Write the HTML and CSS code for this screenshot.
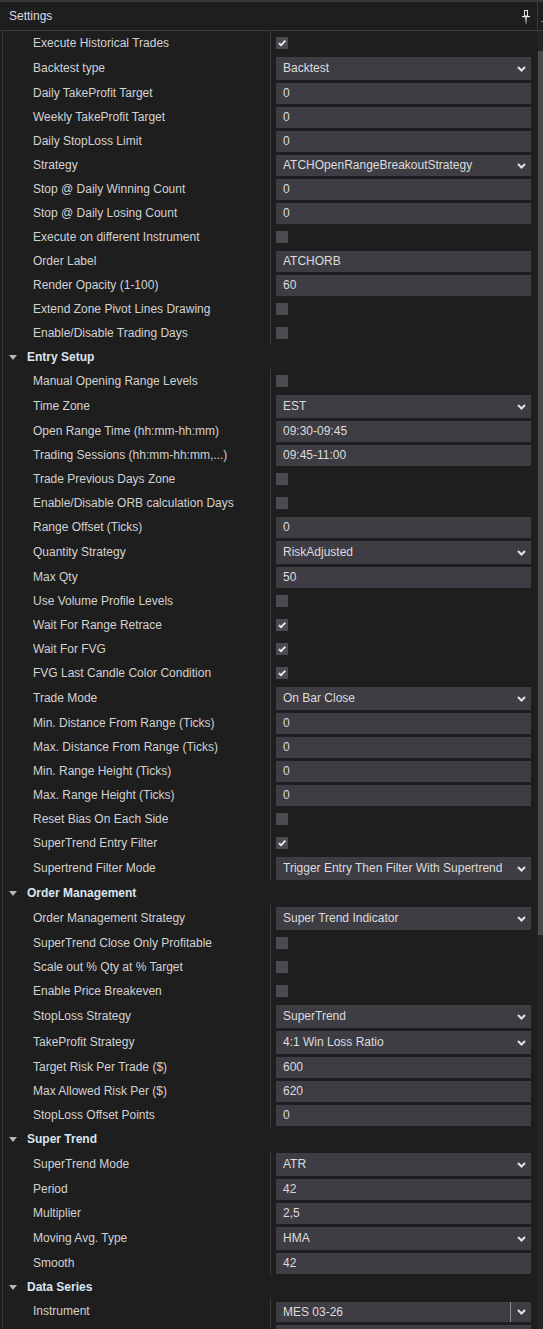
FILE: index.html
```html
<!DOCTYPE html>
<html lang="en">
<head>
<meta charset="utf-8">
<title>Settings</title>
<link rel="stylesheet" href="styles.css">
</head>
<body>
<div class="panel">
  <div class="titlebar">
    <span class="title">Settings</span>
    <svg class="pin" width="8" height="14" viewBox="0 0 8 14">
      <defs>
        <linearGradient id="stem" x1="0" y1="0" x2="0" y2="1">
          <stop offset="0" stop-color="#e8e8e8"/>
          <stop offset="1" stop-color="#5a5a5a"/>
        </linearGradient>
      </defs>
      <rect x="2.5" y="0.5" width="3" height="5.5" fill="none" stroke="#e6e6e6" stroke-width="1"/>
      <rect x="0" y="6" width="8" height="1.2" fill="#e6e6e6"/>
      <rect x="3.2" y="7" width="1.6" height="7" fill="url(#stem)"/>
    </svg>
    <span class="title-end"><i></i></span>
  </div>

  <div class="content">
    <div class="grid">
      <div class="row cb"><div class="label">Execute Historical Trades</div><div class="value"><span class="check on"><svg width="12" height="12" viewBox="0 0 12 12"><path d="M3 6.2 L5 8.3 L9.3 3.6" fill="none" stroke="#f2f2f2" stroke-width="1.8"/></svg></span></div></div>
      <div class="row dd"><div class="label">Backtest type</div><div class="value"><div class="box select"><span>Backtest</span><svg class="chev" width="9" height="6" viewBox="0 0 9 6"><path d="M1 1 L4.5 4.5 L8 1" fill="none" stroke="#e4e4e4" stroke-width="2"/></svg></div></div></div>
      <div class="row"><div class="label">Daily TakeProfit Target</div><div class="value"><div class="box">0</div></div></div>
      <div class="row"><div class="label">Weekly TakeProfit Target</div><div class="value"><div class="box">0</div></div></div>
      <div class="row"><div class="label">Daily StopLoss Limit</div><div class="value"><div class="box">0</div></div></div>
      <div class="row"><div class="label">Strategy</div><div class="value"><div class="box select"><span>ATCHOpenRangeBreakoutStrategy</span><svg class="chev" width="9" height="6" viewBox="0 0 9 6"><path d="M1 1 L4.5 4.5 L8 1" fill="none" stroke="#e4e4e4" stroke-width="2"/></svg></div></div></div>
      <div class="row"><div class="label">Stop @ Daily Winning Count</div><div class="value"><div class="box">0</div></div></div>
      <div class="row"><div class="label">Stop @ Daily Losing Count</div><div class="value"><div class="box">0</div></div></div>
      <div class="row cb"><div class="label">Execute on different Instrument</div><div class="value"><span class="check"></span></div></div>
      <div class="row"><div class="label">Order Label</div><div class="value"><div class="box">ATCHORB</div></div></div>
      <div class="row"><div class="label">Render Opacity (1-100)</div><div class="value"><div class="box">60</div></div></div>
      <div class="row cb"><div class="label">Extend Zone Pivot Lines Drawing</div><div class="value"><span class="check"></span></div></div>
      <div class="row cb"><div class="label">Enable/Disable Trading Days</div><div class="value"><span class="check"></span></div></div>

      <div class="section"><span class="tri"></span>Entry Setup</div>
      <div class="row cb"><div class="label">Manual Opening Range Levels</div><div class="value"><span class="check"></span></div></div>
      <div class="row dd"><div class="label">Time Zone</div><div class="value"><div class="box select"><span>EST</span><svg class="chev" width="9" height="6" viewBox="0 0 9 6"><path d="M1 1 L4.5 4.5 L8 1" fill="none" stroke="#e4e4e4" stroke-width="2"/></svg></div></div></div>
      <div class="row"><div class="label">Open Range Time (hh:mm-hh:mm)</div><div class="value"><div class="box">09:30-09:45</div></div></div>
      <div class="row"><div class="label">Trading Sessions (hh:mm-hh:mm,...)</div><div class="value"><div class="box">09:45-11:00</div></div></div>
      <div class="row cb"><div class="label">Trade Previous Days Zone</div><div class="value"><span class="check"></span></div></div>
      <div class="row cb"><div class="label">Enable/Disable ORB calculation Days</div><div class="value"><span class="check"></span></div></div>
      <div class="row"><div class="label">Range Offset (Ticks)</div><div class="value"><div class="box">0</div></div></div>
      <div class="row dd"><div class="label">Quantity Strategy</div><div class="value"><div class="box select"><span>RiskAdjusted</span><svg class="chev" width="9" height="6" viewBox="0 0 9 6"><path d="M1 1 L4.5 4.5 L8 1" fill="none" stroke="#e4e4e4" stroke-width="2"/></svg></div></div></div>
      <div class="row"><div class="label">Max Qty</div><div class="value"><div class="box">50</div></div></div>
      <div class="row cb"><div class="label">Use Volume Profile Levels</div><div class="value"><span class="check"></span></div></div>
      <div class="row cb"><div class="label">Wait For Range Retrace</div><div class="value"><span class="check on"><svg width="12" height="12" viewBox="0 0 12 12"><path d="M3 6.2 L5 8.3 L9.3 3.6" fill="none" stroke="#f2f2f2" stroke-width="1.8"/></svg></span></div></div>
      <div class="row cb"><div class="label">Wait For FVG</div><div class="value"><span class="check on"><svg width="12" height="12" viewBox="0 0 12 12"><path d="M3 6.2 L5 8.3 L9.3 3.6" fill="none" stroke="#f2f2f2" stroke-width="1.8"/></svg></span></div></div>
      <div class="row cb"><div class="label">FVG Last Candle Color Condition</div><div class="value"><span class="check on"><svg width="12" height="12" viewBox="0 0 12 12"><path d="M3 6.2 L5 8.3 L9.3 3.6" fill="none" stroke="#f2f2f2" stroke-width="1.8"/></svg></span></div></div>
      <div class="row dd"><div class="label">Trade Mode</div><div class="value"><div class="box select"><span>On Bar Close</span><svg class="chev" width="9" height="6" viewBox="0 0 9 6"><path d="M1 1 L4.5 4.5 L8 1" fill="none" stroke="#e4e4e4" stroke-width="2"/></svg></div></div></div>
      <div class="row"><div class="label">Min. Distance From Range (Ticks)</div><div class="value"><div class="box">0</div></div></div>
      <div class="row"><div class="label">Max. Distance From Range (Ticks)</div><div class="value"><div class="box">0</div></div></div>
      <div class="row"><div class="label">Min. Range Height (Ticks)</div><div class="value"><div class="box">0</div></div></div>
      <div class="row"><div class="label">Max. Range Height (Ticks)</div><div class="value"><div class="box">0</div></div></div>
      <div class="row cb"><div class="label">Reset Bias On Each Side</div><div class="value"><span class="check"></span></div></div>
      <div class="row cb"><div class="label">SuperTrend Entry Filter</div><div class="value"><span class="check on"><svg width="12" height="12" viewBox="0 0 12 12"><path d="M3 6.2 L5 8.3 L9.3 3.6" fill="none" stroke="#f2f2f2" stroke-width="1.8"/></svg></span></div></div>
      <div class="row dd"><div class="label">Supertrend Filter Mode</div><div class="value"><div class="box select"><span>Trigger Entry Then Filter With Supertrend</span><svg class="chev" width="9" height="6" viewBox="0 0 9 6"><path d="M1 1 L4.5 4.5 L8 1" fill="none" stroke="#e4e4e4" stroke-width="2"/></svg></div></div></div>

      <div class="section"><span class="tri"></span>Order Management</div>
      <div class="row dd"><div class="label">Order Management Strategy</div><div class="value"><div class="box select"><span>Super Trend Indicator</span><svg class="chev" width="9" height="6" viewBox="0 0 9 6"><path d="M1 1 L4.5 4.5 L8 1" fill="none" stroke="#e4e4e4" stroke-width="2"/></svg></div></div></div>
      <div class="row cb"><div class="label">SuperTrend Close Only Profitable</div><div class="value"><span class="check"></span></div></div>
      <div class="row cb"><div class="label">Scale out % Qty at % Target</div><div class="value"><span class="check"></span></div></div>
      <div class="row cb"><div class="label">Enable Price Breakeven</div><div class="value"><span class="check"></span></div></div>
      <div class="row dd"><div class="label">StopLoss Strategy</div><div class="value"><div class="box select"><span>SuperTrend</span><svg class="chev" width="9" height="6" viewBox="0 0 9 6"><path d="M1 1 L4.5 4.5 L8 1" fill="none" stroke="#e4e4e4" stroke-width="2"/></svg></div></div></div>
      <div class="row dd"><div class="label">TakeProfit Strategy</div><div class="value"><div class="box select"><span>4:1 Win Loss Ratio</span><svg class="chev" width="9" height="6" viewBox="0 0 9 6"><path d="M1 1 L4.5 4.5 L8 1" fill="none" stroke="#e4e4e4" stroke-width="2"/></svg></div></div></div>
      <div class="row"><div class="label">Target Risk Per Trade ($)</div><div class="value"><div class="box">600</div></div></div>
      <div class="row"><div class="label">Max Allowed Risk Per ($)</div><div class="value"><div class="box">620</div></div></div>
      <div class="row"><div class="label">StopLoss Offset Points</div><div class="value"><div class="box">0</div></div></div>

      <div class="section"><span class="tri"></span>Super Trend</div>
      <div class="row dd"><div class="label">SuperTrend Mode</div><div class="value"><div class="box select"><span>ATR</span><svg class="chev" width="9" height="6" viewBox="0 0 9 6"><path d="M1 1 L4.5 4.5 L8 1" fill="none" stroke="#e4e4e4" stroke-width="2"/></svg></div></div></div>
      <div class="row"><div class="label">Period</div><div class="value"><div class="box">42</div></div></div>
      <div class="row"><div class="label">Multiplier</div><div class="value"><div class="box">2,5</div></div></div>
      <div class="row dd"><div class="label">Moving Avg. Type</div><div class="value"><div class="box select"><span>HMA</span><svg class="chev" width="9" height="6" viewBox="0 0 9 6"><path d="M1 1 L4.5 4.5 L8 1" fill="none" stroke="#e4e4e4" stroke-width="2"/></svg></div></div></div>
      <div class="row"><div class="label">Smooth</div><div class="value"><div class="box">42</div></div></div>

      <div class="section"><span class="tri"></span>Data Series</div>
      <div class="row"><div class="label">Instrument</div><div class="value"><div class="box picker"><span class="picker-text">MES 03-26</span><span class="picker-btn"><svg width="9" height="6" viewBox="0 0 9 6"><path d="M1 1 L4.5 4.5 L8 1" fill="none" stroke="#e4e4e4" stroke-width="2"/></svg></span></div></div></div>
      <div class="row"><div class="label"></div><div class="value"><div class="box"></div></div></div>
    </div>
    <div class="scroll"><div class="thumb"></div></div>
  </div>
</div>
</body>
</html>
```

FILE: styles.css
```css
html, body {
  margin: 0;
  padding: 0;
  background: #1e1e1e;
}

body {
  font-family: "Liberation Sans", Arial, sans-serif;
  font-size: 12px;
  color: #d3d3d3;
}

.panel {
  width: 543px;
  height: 1329px;
  overflow: hidden;
  display: flex;
  flex-direction: column;
  background: #1e1e1e;
}

/* title bar */
.titlebar {
  flex: none;
  height: 28px;
  border-top: 2px solid #383838;
  border-bottom: 1px solid #3d3d3d;
  display: flex;
  align-items: center;
  padding-left: 9px;
}

.title {
  flex: 1;
  color: #d9dce2;
}

.pin {
  flex: none;
  margin-right: 7px;
  margin-top: 1px;
}

.title-end {
  flex: none;
  width: 5px;
  height: 100%;
  border-left: 1px solid #3a3a3a;
  display: flex;
  align-items: center;
  justify-content: flex-end;
}

.title-end i {
  display: block;
  width: 2px;
  height: 1px;
  margin-top: 10px;
  background: #8a8a8a;
}

/* property grid */
.content {
  flex: 1;
  min-height: 0;
  display: flex;
}

.grid {
  flex: 1;
  margin-left: 2px;
  border-left: 1px solid #363636;
}

.row {
  display: flex;
  height: 24px;
}

.row.dd {
  height: 26px;
}

.label {
  flex: none;
  width: 267px;
  box-sizing: border-box;
  padding-left: 30px;
  display: flex;
  align-items: center;
  white-space: nowrap;
  color: #d2d2d2;
}

.value {
  flex: 1;
  min-width: 0;
  border-left: 1px solid #3c3c3c;
  padding: 2px 6px 0 5px;
  display: flex;
  align-items: flex-start;
}

.row.cb .value {
  padding-top: 6px;
}

.box {
  width: 255px;
  height: 21px;
  line-height: 21px;
  box-sizing: border-box;
  padding-left: 7px;
  background: #3e3d44;
  color: #dcdcdc;
  white-space: nowrap;
  overflow: hidden;
}

.row.dd .box {
  height: 23px;
  line-height: 23px;
}

.select {
  display: flex;
  align-items: center;
  padding-right: 5px;
}

.select span {
  flex: 1;
  overflow: hidden;
}

.chev {
  flex: none;
}

.picker {
  display: flex;
  padding-right: 0;
  height: 20px;
  line-height: 20px;
  margin-top: 1px;
}

.picker-text {
  flex: 1;
}

.picker-btn {
  flex: none;
  width: 20px;
  border-left: 1px solid #8e8e8e;
  display: flex;
  align-items: center;
  justify-content: center;
}

/* checkboxes */
.check {
  display: block;
  width: 12px;
  height: 12px;
  background: #4b4a51;
}

.check svg {
  display: block;
}

/* category headers */
.section {
  height: 24px;
  display: flex;
  align-items: center;
  padding-left: 6px;
  font-weight: bold;
  color: #dbe5f1;
}

.tri {
  width: 0;
  height: 0;
  border-left: 4px solid transparent;
  border-right: 4px solid transparent;
  border-top: 5px solid #b6b6b6;
  margin-right: 10px;
  margin-top: 1px;
}

/* scrollbar */
.scroll {
  flex: none;
  width: 6px;
  background: #242424;
}

.thumb {
  margin-top: 20px;
  margin-left: 1px;
  width: 5px;
  height: 884px;
  background: #4a4a4a;
}
```
